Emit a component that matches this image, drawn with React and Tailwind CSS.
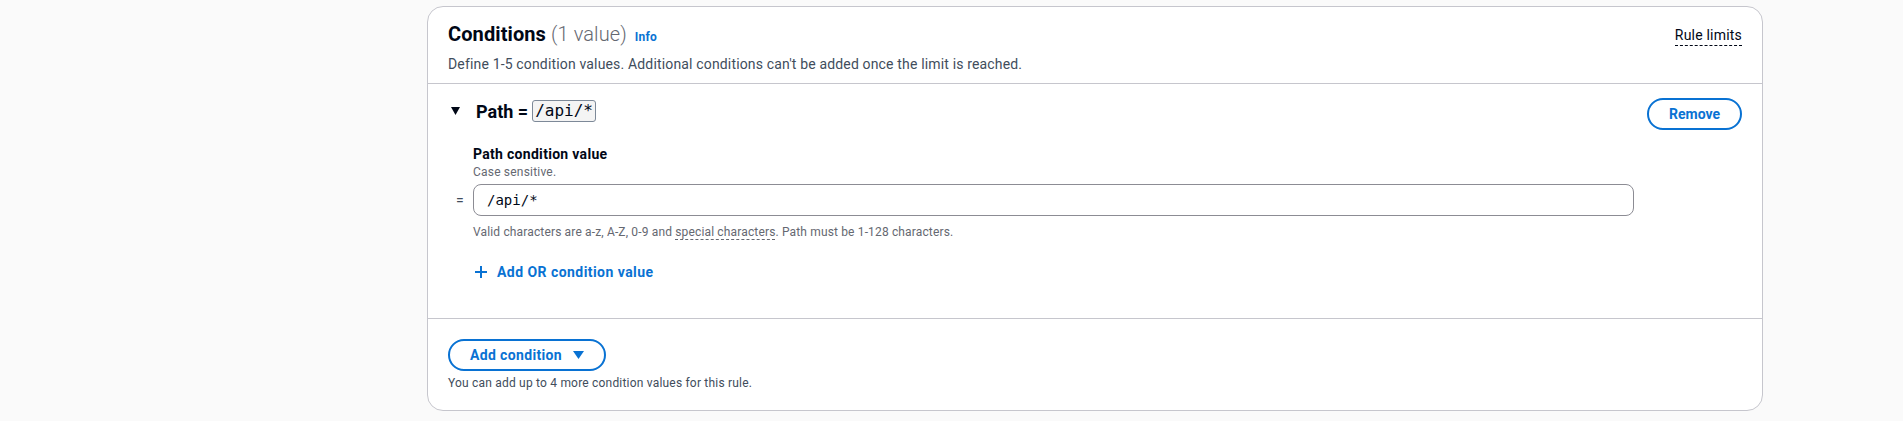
import React from 'react';

const Caret = ({ className, w = 9, h = 8 }) => (
  <svg width={w} height={h} viewBox={`0 0 ${w} ${h}`} className={className}>
    <polygon points={`0,0 ${w},0 ${w / 2},${h}`} fill="currentColor" />
  </svg>
);

const PlusIcon = () => (
  <svg width="12" height="12" viewBox="0 0 12 12" className="shrink-0">
    <path d="M0 6h12M6 0v12" stroke="currentColor" strokeWidth="2" fill="none" />
  </svg>
);

const ConditionValue = ({ value }) => (
  <div className="grid grid-cols-[22px_1161px]">
    <div />
    <div className="mt-[14px] text-sm font-bold leading-5 tracking-[0.3px] text-[#000716]">Path condition value</div>
    <div />
    <div className="text-xs leading-4 tracking-[0.2px] text-[#656871]">Case sensitive.</div>

    <div className="mt-1 flex items-center pl-[5px] text-sm text-[#414d5c]">=</div>
    <div className="mt-1 flex h-8 items-center rounded-lg border border-[#8c8c94] bg-white pl-[13px] font-['DejaVu_Sans_Mono',monospace] text-[14px] tracking-normal text-[#000716]">
      {value}
    </div>

    <div />
    <div className="mt-2 text-xs leading-4 tracking-[0.15px] text-[#656871]">
      Valid characters are a-z, A-Z, 0-9 and{' '}
      <span className="border-b border-dashed border-[#656871]">special characters</span>. Path must be 1-128
      characters.
    </div>

    <div />
    <button className="mt-[22px] flex w-fit items-center gap-[10px] pl-[2px] text-sm font-bold leading-5 tracking-[0.45px] text-[#0972d3]">
      <PlusIcon />
      Add OR condition value
    </button>
  </div>
);

const App = () => {
  return (
    <div className="min-h-[421px] bg-[#fafafa] pt-[6px] font-['Roboto',sans-serif] tracking-[0.2px] text-[#000716]">
      <div className="ml-[427px] w-[1336px] rounded-2xl border border-[#c6c6cd] bg-white">
        {/* container header */}
        <div className="flex justify-between border-b border-[#c6c6cd] px-5 pb-[9px] pt-[15px]">
          <div>
            <h2 className="flex items-baseline text-[20px] font-bold leading-6 tracking-[0.1px]">
              Conditions
              <span className="ml-[5px] font-light text-[#656871]">(1 value)</span>
              <a href="#" className="ml-2 text-xs font-bold tracking-[0.2px] text-[#0972d3]">Info</a>
            </h2>
            <p className="mt-2 text-sm leading-5 tracking-[0.16px] text-[#414d5c]">
              Define 1-5 condition values. Additional conditions can't be added once the limit is reached.
            </p>
          </div>
          <span className="mt-[3px] h-fit border-b border-dashed border-[#000716] text-sm leading-5">Rule limits</span>
        </div>

        {/* path condition */}
        <div className="border-b border-[#c6c6cd] pb-9 pl-[23px] pr-5 pt-[14px]">
          <div className="flex items-start justify-between">
            <div className="mt-[2px] flex h-[22px] items-center">
              <Caret className="text-[#000716]" />
              <span className="ml-4 text-[18px] font-bold tracking-normal">Path =</span>
              <code className="ml-1 rounded-[3px] border border-[#7d8998] bg-[#f4f4f4] px-[2px] font-['DejaVu_Sans_Mono',monospace] text-[16px] leading-5 tracking-normal">
                /api/*
              </code>
            </div>
            <button className="h-8 rounded-full border-2 border-[#0972d3] px-5 text-sm font-bold tracking-normal text-[#0972d3]">
              Remove
            </button>
          </div>
          <ConditionValue value="/api/*" />
        </div>

        {/* add condition */}
        <div className="px-5 pb-[19px] pt-5">
          <button className="flex h-8 items-center rounded-full border-2 border-[#0972d3] px-5 text-sm font-bold tracking-[0.35px] text-[#0972d3]">
            Add condition
            <Caret className="ml-[11px]" w={11} h={8} />
          </button>
          <p className="mt-1 text-xs leading-4 text-[#414d5c]">You can add up to 4 more condition values for this rule.</p>
        </div>
      </div>
    </div>
  );
};

export default App;
